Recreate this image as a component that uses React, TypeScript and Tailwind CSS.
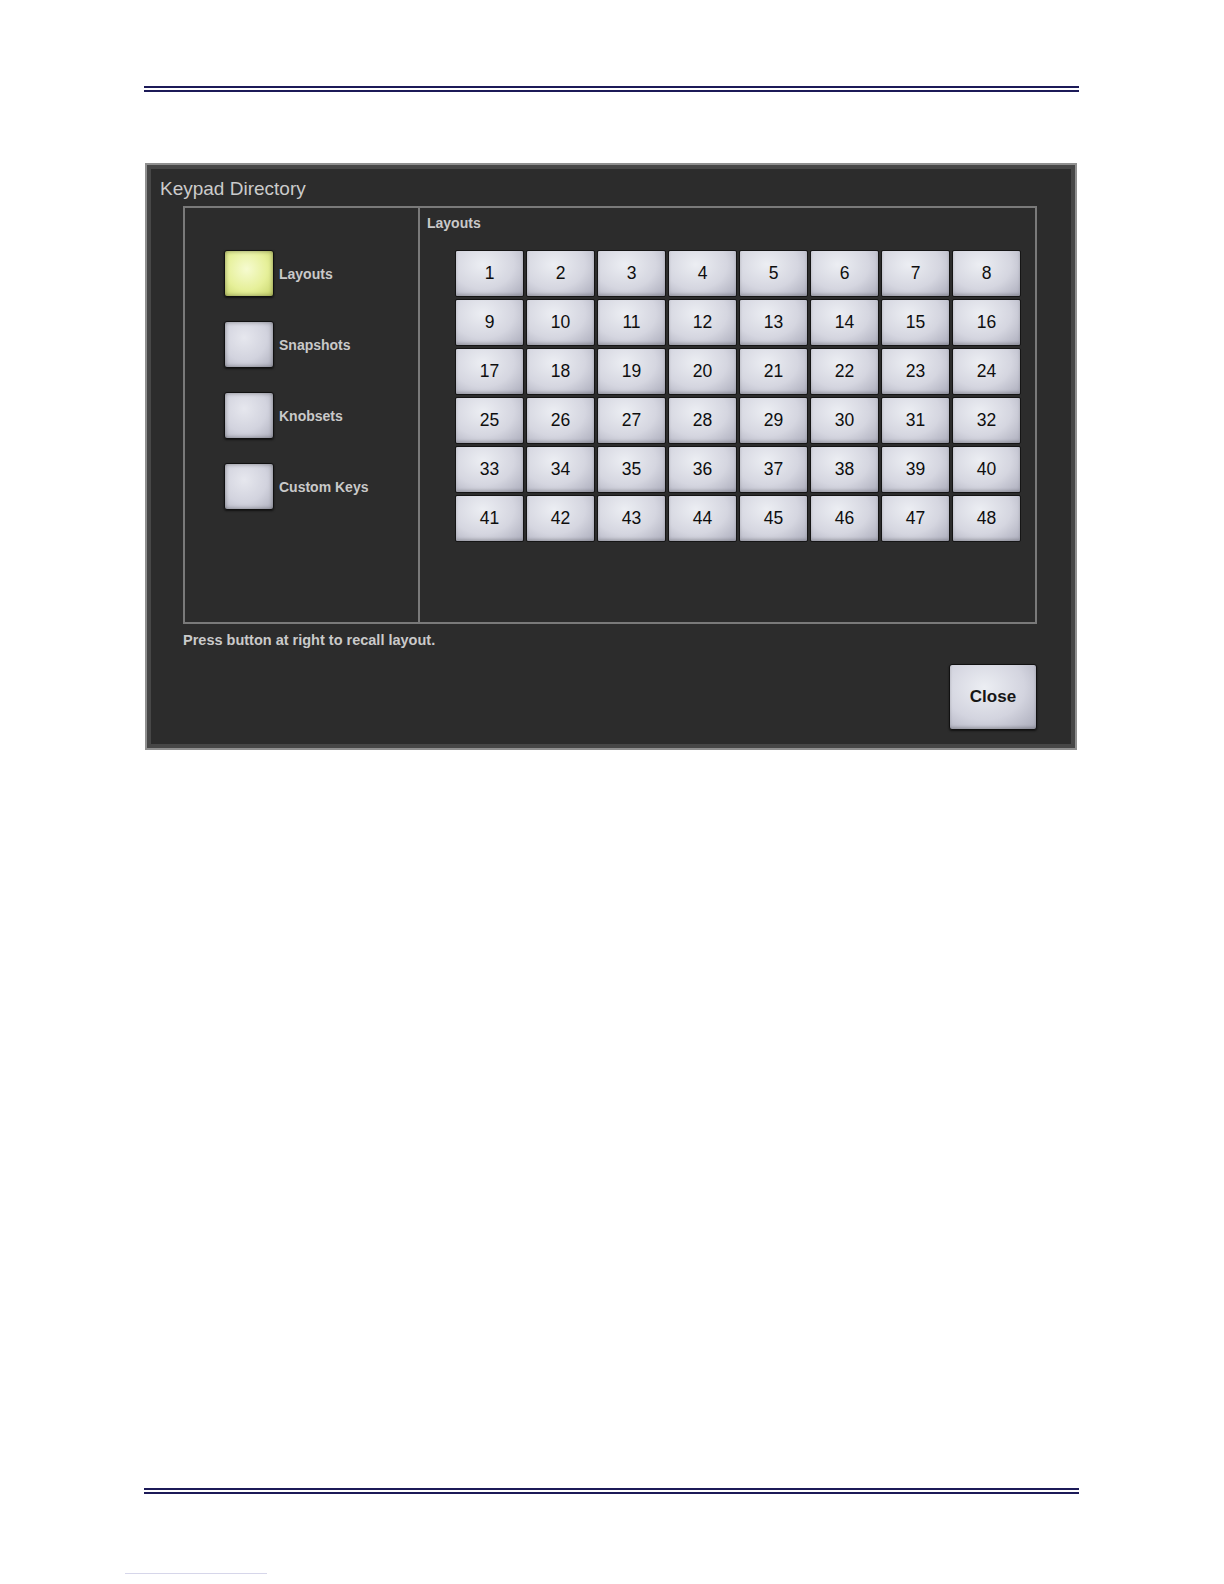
import React from "react";

const F = { fontFamily: '"Liberation Sans", Arial, sans-serif' };

function SideButton({ label, active }: { label: string; active?: boolean }) {
  return (
    <div className="flex items-center gap-[5px]">
      <div
        className={
          "w-[50px] h-[47px] rounded-[3px] border border-[#111] shadow-[inset_0_0_4px_rgba(0,0,0,0.4),0_1px_2px_rgba(0,0,0,0.6)] " +
          (active
            ? "bg-[radial-gradient(ellipse_at_45%_40%,#f6fbd0_0%,#e6f09a_55%,#c7d46a_100%)]"
            : "bg-[radial-gradient(ellipse_at_40%_35%,#e6e7ee_0%,#d2d3de_55%,#aeafbd_100%)]")
        }
      />
      <span className="text-[14px] font-bold leading-[16px] text-[#c9c9c9]">{label}</span>
    </div>
  );
}

function NumKey({ n }: { n: number }) {
  return (
    <div className="h-[47px] flex items-center justify-center rounded-[2px] border border-[#151515] bg-[radial-gradient(ellipse_at_40%_30%,#eceef3_0%,#d5d6e0_55%,#abacbb_100%)] shadow-[inset_0_-2px_3px_rgba(0,0,0,0.18)] text-[17.5px] leading-none text-[#0e0e0e]">
      {n}
    </div>
  );
}

export default function App() {
  const nums = Array.from({ length: 48 }, (_, i) => i + 1);
  return (
    <div className="relative w-full min-h-[1584px] bg-white" style={F}>
      {/* header rule */}
      <div className="pt-[86px] pl-[144px]">
        <div className="w-[935px] h-[6px] border-y-2 border-[#1c1a58]" />
      </div>

      {/* panel */}
      <div className="mt-[71px] ml-[145px] w-[932px] h-[587px] border-2 border-[#909090]">
        <div className="w-full h-full border-4 border-[#474747] bg-[#2c2c2c] flex flex-col">
          <div className="h-[37px] pl-[9px] pt-[9px] text-[19px] leading-[21px] text-[#cbcbcb]">
            Keypad Directory
          </div>
          <div className="ml-[32px] w-[854px] h-[418px] border-2 border-[#7a7a7a] flex">
            <div className="w-[235px] h-full border-r-2 border-[#7a7a7a] pl-[39px] pt-[42px] flex flex-col gap-[24px]">
              <SideButton label="Layouts" active />
              <SideButton label="Snapshots" />
              <SideButton label="Knobsets" />
              <SideButton label="Custom Keys" />
            </div>
            <div className="flex-1 pl-[7px] pt-[7px]">
              <div className="text-[14px] font-bold leading-[16px] text-[#c9c9c9]">Layouts</div>
              <div className="mt-[19px] ml-[28px] w-[566px] grid grid-cols-8 gap-[2px]">
                {nums.map((n) => (
                  <NumKey key={n} n={n} />
                ))}
              </div>
            </div>
          </div>
          <div className="ml-[32px] mt-[8px] text-[14.5px] font-bold leading-[17px] text-[#cacaca]">
            Press button at right to recall layout.
          </div>
          <div className="flex justify-end pr-[34px] mt-[15px]">
            <div className="w-[88px] h-[66px] flex items-center justify-center rounded-[3px] border border-[#111] bg-[radial-gradient(ellipse_at_40%_35%,#eceef3_0%,#d3d4df_55%,#a9aab9_100%)] shadow-[inset_0_-2px_3px_rgba(0,0,0,0.2),0_1px_2px_rgba(0,0,0,0.6)] text-[17px] font-bold text-[#161616]">
              Close
            </div>
          </div>
        </div>
      </div>

      {/* footer rule */}
      <div className="mt-[738px] pl-[144px]">
        <div className="w-[935px] h-[6px] border-y-2 border-[#1c1a58]" />
      </div>
      <div className="mt-[79px] ml-[125px] w-[142px] h-px bg-[#d6d6ea]" />
    </div>
  );
}
